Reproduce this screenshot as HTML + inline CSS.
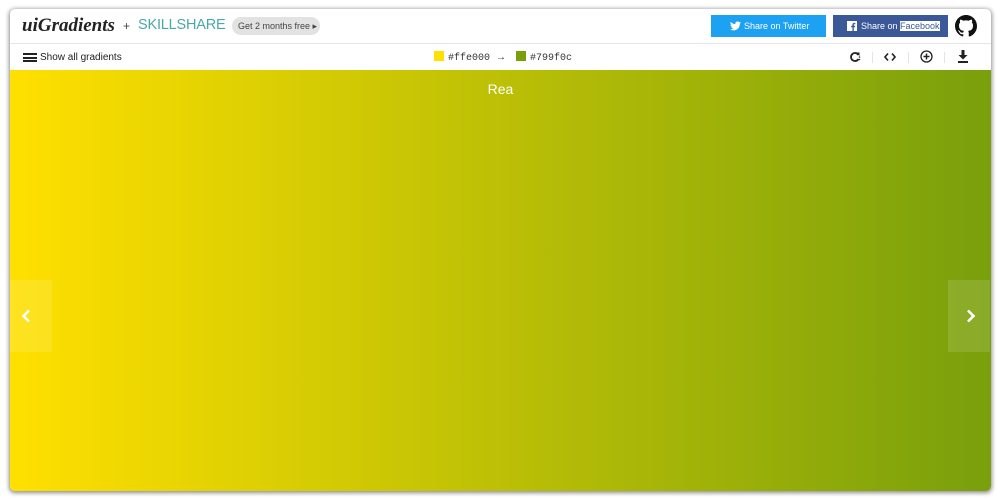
<!DOCTYPE html>
<html><head><style>
*{margin:0;padding:0;box-sizing:border-box}
body{width:1000px;height:500px;background:#fff;font-family:"Liberation Sans",sans-serif;position:relative;overflow:hidden;white-space:nowrap}
.box{position:absolute;left:10px;top:9px;width:981px;height:482px;border-radius:5px;overflow:hidden;box-shadow:0 1px 4px 1px rgba(0,0,0,.45);background:#fff}
.hdr{position:absolute;left:0;top:0;width:100%;height:35px;border-bottom:1px solid #e6e6e6}
.tb{position:absolute;left:0;top:35px;width:100%;height:26px}
.grad{position:absolute;left:0;top:61px;width:100%;height:421px;background:linear-gradient(to right,#ffe000,#799f0c)}
.logo{position:absolute;left:12px;top:6px;font:italic bold 19px "Liberation Serif",serif;color:#222;letter-spacing:0}
.plus{position:absolute;left:113px;top:10px;font-size:12px;color:#444}
.sk{position:absolute;left:128px;top:8px;font-size:14.5px;color:#49a8a8;letter-spacing:-0.2px}
.pill{position:absolute;left:222px;top:8px;width:88px;height:18px;border-radius:9px;background:#e2e2e2;font-size:9px;color:#444;line-height:18px;padding-left:6px}
.tw{position:absolute;left:701px;top:6px;width:115px;height:22px;background:#1da1f2;color:#fff;font-size:9px;line-height:22px;padding-left:33px}
.fb{position:absolute;left:823px;top:6px;width:115px;height:22px;background:#3b5998;color:#fff;font-size:9px;line-height:22px;padding-left:28px}
.fb span{background:#fff;color:#3b5998}
.show{position:absolute;top:8px;font-size:10px;color:#222}
.ham{position:absolute;left:13px;top:9px;width:14px;height:9px;border-top:2px solid #222;border-bottom:2px solid #222}
.ham:after{content:"";position:absolute;left:0;top:1.5px;width:14px;height:2px;background:#222}
.cols{position:absolute;left:424px;top:7px;font:10px "Liberation Mono",monospace;color:#333}
.sw{display:inline-block;width:10px;height:10px;vertical-align:-1px;margin-right:4px}
.sep{position:absolute;top:8px;width:1px;height:11px;background:#e4e4e4}
.title{position:absolute;top:11px;width:100%;text-align:center;color:#fff;font-size:14px}
.arr{position:absolute;top:210px;width:42px;height:72px;background:rgba(255,255,255,.12)}
.arr svg{position:absolute;top:29px}
</style></head><body>
<div class="box">
 <div class="hdr">
  <div class="logo">uiGradients</div><div class="plus">+</div><div class="sk">SKILLSHARE</div>
  <div class="pill">Get 2 months free ▸</div>
  <div class="tw"><svg style="position:absolute;left:19px;top:6px" width="11" height="10" viewBox="0 0 24 20"><path fill="#fff" d="M24 2.4a10 10 0 0 1-2.8.8A5 5 0 0 0 23.3.4a10 10 0 0 1-3.1 1.2A4.9 4.9 0 0 0 11.8 6 14 14 0 0 1 1.7.9a4.9 4.9 0 0 0 1.5 6.6 4.9 4.9 0 0 1-2.2-.6v.1a4.9 4.9 0 0 0 3.9 4.8 5 5 0 0 1-2.2.1 4.9 4.9 0 0 0 4.6 3.4A9.9 9.9 0 0 1 0 17.3 14 14 0 0 0 7.5 19.5c9 0 14-7.5 14-14v-.6A10 10 0 0 0 24 2.4z"/></svg>Share on Twitter</div>
  <div class="fb"><svg style="position:absolute;left:14px;top:6px" width="10" height="10" viewBox="0 0 10 10"><rect width="10" height="10" fill="#fff"/><path fill="#3b5998" d="M6.8 10V6.2h1.2l.2-1.4H6.8v-.9c0-.4.1-.7.7-.7h.8V1.9H7.2C6.1 1.9 5.4 2.6 5.4 3.8v1H4.2v1.4h1.2V10z"/></svg>Share on <span>Facebook</span></div>
  <svg style="position:absolute;left:945px;top:6px" width="22" height="22" viewBox="0 0 16 16"><path fill="#111" d="M8 0C3.58 0 0 3.58 0 8c0 3.54 2.29 6.530 5.47 7.59.4.07.55-.17.55-.38v-1.34c-2.23.48-2.7-1.07-2.7-1.07-.36-.93-.89-1.170-.89-1.17-.73-.5.05-.49.05-.49.8.06 1.23.83 1.23.83.72 1.23 1.88.87 2.34.66.07-.52.28-.87.51-1.07-1.78-.2-3.640-.89-3.64-3.95 0-.87.31-1.59.82-2.15-.08-.2-.36-1.02.08-2.12 0 0 .67-.21 2.2.82a7.6 7.6 0 0 1 4 0c1.53-1.04 2.2-.82 2.2-.82.44 1.1.16 1.92.08 2.12.51.56.82 1.27.82 2.15 0 3.07-1.87 3.75-3.65 3.95.29.25.54.73.54 1.48v2.2c0 .21.15.46.55.38A8 8 0 0 0 16 8c0-4.42-3.58-8-8-8z"/></svg>
 </div>
 <div class="tb">
  <div class="ham"></div><div class="show" style="left:30px">Show all gradients</div>
  <div class="cols"><span class="sw" style="background:#ffe000"></span>#ffe000 <span style="font-family:'Liberation Sans'">→</span> <span class="sw" style="background:#799f0c;margin-left:4px"></span>#799f0c</div>
  <svg style="position:absolute;left:839px;top:7px" width="12" height="12" viewBox="0 0 12 12"><path d="M9.5 4A4 4 0 1 0 9.5 8" fill="none" stroke="#222" stroke-width="1.8"/><path d="M7 1.5h3.5V5z" fill="#222"/><circle cx="10.5" cy="6" r=".8" fill="#222"/><circle cx="10.5" cy="8.5" r=".8" fill="#222"/></svg>
  <div class="sep" style="left:862px"></div>
  <svg style="position:absolute;left:874px;top:8px" width="12" height="10" viewBox="0 0 12 10"><path d="M4 1.5L1 5l3 3.5M8 1.5L11 5 8 8.5" fill="none" stroke="#222" stroke-width="1.6"/></svg>
  <div class="sep" style="left:898px"></div>
  <svg style="position:absolute;left:910px;top:6px" width="13" height="13" viewBox="0 0 13 13"><circle cx="6.5" cy="6.5" r="5.5" fill="none" stroke="#222" stroke-width="1.3"/><path d="M6.5 3.5v6M3.5 6.5h6" stroke="#222" stroke-width="1.5"/></svg>
  <div class="sep" style="left:934px"></div>
  <svg style="position:absolute;left:947px;top:6px" width="12" height="13" viewBox="0 0 12 13"><path d="M4.5 0h3v5h3L6 9.5 1.5 5h3z" fill="#222"/><rect x="1" y="11" width="10" height="2" fill="#222"/></svg>
 </div>
 <div class="grad">
  <div class="title">Rea</div>
  <div class="arr" style="left:0"><svg style="left:10px" width="12" height="14" viewBox="0 0 12 14"><path d="M9 1.5L3.5 7 9 12.5" fill="none" stroke="#fff" stroke-width="2.6"/></svg></div>
  <div class="arr" style="left:938px"><svg style="left:17px" width="12" height="14" viewBox="0 0 12 14"><path d="M3 1.5L8.5 7 3 12.5" fill="none" stroke="#fff" stroke-width="2.6"/></svg></div>
 </div>
</div>
</body></html>
